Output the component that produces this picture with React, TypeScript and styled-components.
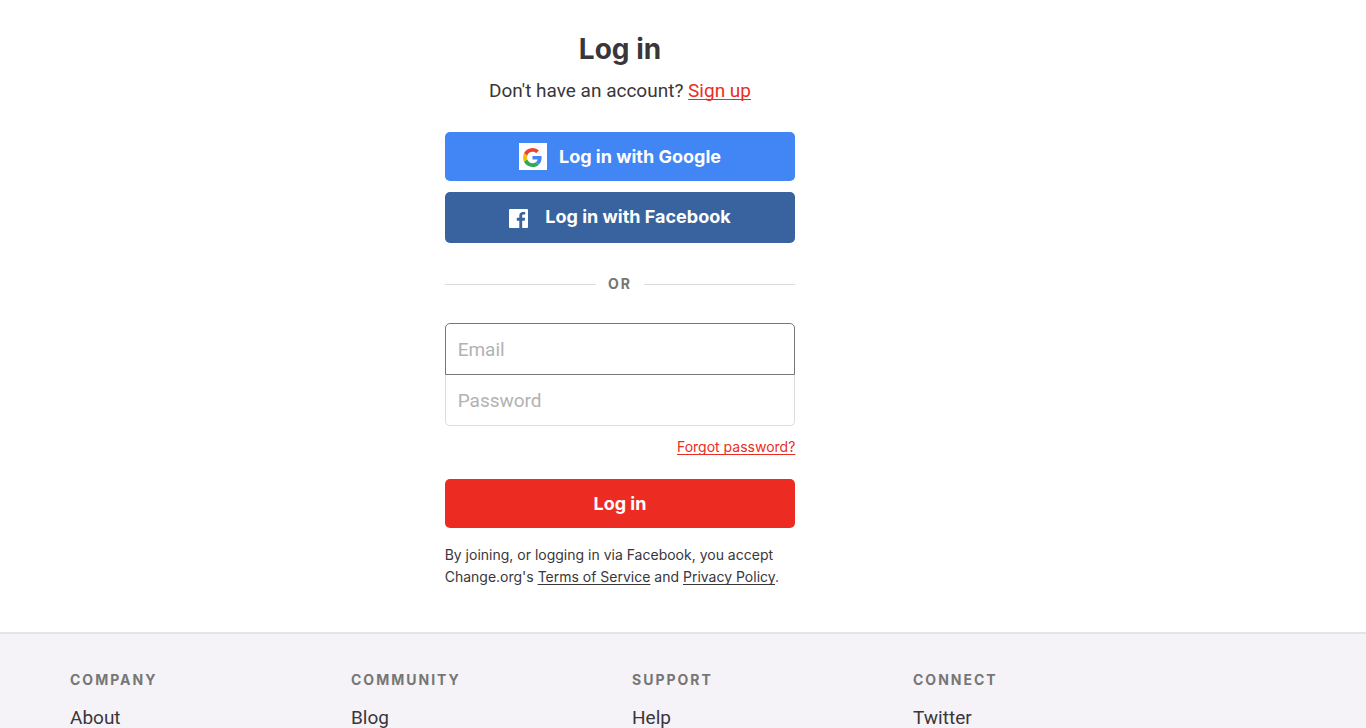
import React from "react";
import styled, { createGlobalStyle } from "styled-components";

const GlobalStyle = createGlobalStyle`
  *, *::before, *::after { box-sizing: border-box; }
  body {
    margin: 0;
    background: #fff;
    color: #3a363a;
    font-family: Roboto, "Liberation Sans", sans-serif;
    font-size: 19px;
    line-height: 24px;
  }
  button, input { font: inherit; }
`;

const wideFont = `Inter, Roboto, sans-serif`;

const Container = styled.div<{ $columns: number }>`
  display: grid;
  grid-template-columns: repeat(${(p) => p.$columns}, 1fr);
  max-width: 1240px;
  padding: 0 58px;
`;

const Main = styled.main`
  padding: 32px 0 44px;
`;

const LoginPanel = styled.section`
  grid-column: 2;
  padding: 0 12px;
`;

const Title = styled.h1`
  margin: 0;
  font-family: ${wideFont};
  font-size: 28px;
  line-height: 34px;
  font-weight: 700;
  text-align: center;
`;

const Intro = styled.p`
  margin: 13px 0 29px;
  text-align: center;
`;

const TextLink = styled.a<{ $accent?: boolean }>`
  color: ${(p) => (p.$accent ? "#ec2c22" : "inherit")};
  text-decoration: underline;
  text-decoration-thickness: 1px;
  text-underline-offset: 2px;
  text-decoration-skip-ink: none;
`;

const Button = styled.button<{ $color: string; $tall?: boolean }>`
  display: flex;
  align-items: center;
  justify-content: center;
  width: 100%;
  height: ${(p) => (p.$tall ? 51 : 49)}px;
  padding: ${(p) => (p.$tall ? "0 0 2px" : "0")};
  border: 0;
  border-radius: 5px;
  background: ${(p) => p.$color};
  color: #fff;
  font-family: ${wideFont};
  font-size: 18px;
  font-weight: 700;
  cursor: pointer;
`;

const SocialButtons = styled.div`
  display: grid;
  gap: 11px;
`;

const GoogleTile = styled.span`
  display: flex;
  align-items: center;
  justify-content: center;
  width: 28px;
  height: 27px;
  margin-right: 12px;
  padding-top: 1px;
  background: #fff;
`;

const FacebookTile = styled.span`
  display: flex;
  padding-top: 3px;
  margin-right: 17px;
`;

const Divider = styled.div`
  display: flex;
  align-items: center;
  gap: 12px;
  margin: 29px 0 27px;
  color: #767676;
  font-family: ${wideFont};
  font-size: 14px;
  font-weight: 700;
  letter-spacing: 2px;

  &::before, &::after {
    content: "";
    flex: 1;
    height: 1px;
    background: #dcdcdc;
  }
`;

const Field = styled.input<{ $position: "top" | "bottom" }>`
  display: block;
  width: 100%;
  height: ${(p) => (p.$position === "top" ? 52 : 51)}px;
  padding: 0 12px;
  border: 1px solid ${(p) => (p.$position === "top" ? "#767676" : "#dcdcdc")};
  border-top-width: ${(p) => (p.$position === "top" ? 1 : 0)}px;
  border-radius: ${(p) => (p.$position === "top" ? "5px 5px 0 0" : "0 0 5px 5px")};
  outline: 0;
  background: #fff;
  color: inherit;

  &::placeholder { color: #b2b2b2; opacity: 1; }
`;

const Forgot = styled.p`
  margin: 10px 0 21px;
  font-family: ${wideFont};
  font-size: 14px;
  line-height: 22px;
  text-align: right;
`;

const Terms = styled.p`
  margin: 16px 0 0;
  font-family: ${wideFont};
  font-size: 14px;
  line-height: 22px;
`;

const Footer = styled.footer`
  padding-top: 36px;
  border-top: 2px solid #e4e4e6;
  background: #f5f3f7;
`;

const FooterColumn = styled.nav`
  padding: 0 12px;
`;

const FooterHeading = styled.h2`
  margin: 0 0 18px;
  color: #767676;
  font-family: ${wideFont};
  font-size: 14px;
  line-height: 20px;
  font-weight: 700;
  letter-spacing: 2px;
  text-transform: uppercase;
`;

const FooterLink = styled.a`
  display: block;
  color: inherit;
  line-height: 20px;
  text-decoration: none;
`;

const GoogleLogo = () => (
  <svg width="19" height="19" viewBox="0 0 48 48" aria-hidden="true">
    <path fill="#EA4335" d="M24 9.5c3.54 0 6.71 1.22 9.21 3.6l6.85-6.85C35.9 2.38 30.47 0 24 0 14.62 0 6.51 5.38 2.56 13.22l7.98 6.19C12.43 13.72 17.74 9.5 24 9.5z" />
    <path fill="#4285F4" d="M46.98 24.55c0-1.57-.15-3.09-.38-4.55H24v9.02h12.94c-.58 2.96-2.26 5.48-4.78 7.18l7.73 6c4.51-4.18 7.09-10.36 7.09-17.65z" />
    <path fill="#FBBC05" d="M10.53 28.59A14.5 14.5 0 0 1 9.77 24c0-1.6.27-3.14.76-4.59l-7.98-6.19A23.9 23.9 0 0 0 0 24c0 3.88.92 7.54 2.56 10.78l7.97-6.19z" />
    <path fill="#34A853" d="M24 48c6.48 0 11.93-2.13 15.89-5.81l-7.73-6c-2.15 1.45-4.92 2.3-8.16 2.3-6.26 0-11.57-4.22-13.47-9.91l-7.98 6.19C6.51 42.62 14.62 48 24 48z" />
  </svg>
);

const FacebookLogo = () => (
  <svg width="19" height="19" viewBox="0 0 19 19" aria-hidden="true">
    <path
      fill="#fff"
      d="M1 0h17a1 1 0 0 1 1 1v17a1 1 0 0 1-1 1h-4.8v-7.3h2.5l.4-2.9h-2.9V7c0-.9.3-1.4 1.5-1.4h1.5V3c-.3 0-1.2-.1-2.2-.1-2.2 0-3.7 1.3-3.7 3.7v2.2H7.800v2.9h2.5V19H1a1 1 0 0 1-1-1V1a1 1 0 0 1 1-1z"
    />
  </svg>
);

const siteName = "Change.org";

const footerColumns = [
  { heading: "Company", link: "About" },
  { heading: "Community", link: "Blog" },
  { heading: "Support", link: "Help" },
  { heading: "Connect", link: "Twitter" },
];

export default function App() {
  return (
    <>
      <GlobalStyle />
      <Main>
        <Container $columns={3}>
          <LoginPanel>
            <Title>Log in</Title>
            <Intro>
              Don't have an account? <TextLink $accent href="#signup">Sign up</TextLink>
            </Intro>
            <SocialButtons>
              <Button type="button" $color="#4285f4">
                <GoogleTile><GoogleLogo /></GoogleTile>
                Log in with Google
              </Button>
              <Button type="button" $color="#38639e" $tall>
                <FacebookTile><FacebookLogo /></FacebookTile>
                Log in with Facebook
              </Button>
            </SocialButtons>
            <Divider>OR</Divider>
            <form onSubmit={(e) => e.preventDefault()}>
              <Field $position="top" type="email" placeholder="Email" aria-label="Email" />
              <Field $position="bottom" type="password" placeholder="Password" aria-label="Password" />
              <Forgot>
                <TextLink $accent href="#forgot">Forgot password?</TextLink>
              </Forgot>
              <Button type="submit" $color="#ec2c22">Log in</Button>
            </form>
            <Terms>
              By joining, or logging in via Facebook, you accept {siteName}'s{" "}
              <TextLink href="#terms">Terms of Service</TextLink> and{" "}
              <TextLink href="#privacy">Privacy Policy</TextLink>.
            </Terms>
          </LoginPanel>
        </Container>
      </Main>
      <Footer>
        <Container $columns={4}>
          {footerColumns.map(({ heading, link }) => (
            <FooterColumn key={heading} aria-label={heading}>
              <FooterHeading>{heading}</FooterHeading>
              <FooterLink href={`#${link.toLowerCase()}`}>{link}</FooterLink>
            </FooterColumn>
          ))}
        </Container>
      </Footer>
    </>
  );
}
